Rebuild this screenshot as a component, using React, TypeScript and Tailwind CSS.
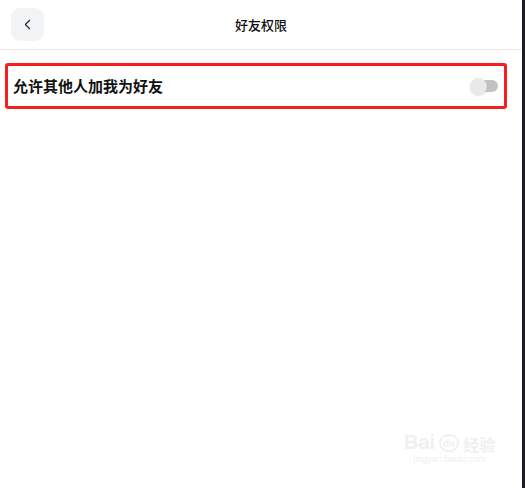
import { ChevronLeft } from "lucide-react";

const FONT = { fontFamily: '"Noto Sans CJK SC", "Noto Sans", sans-serif' };

function Toggle() {
  return (
    <div className="relative w-[28px] h-[18px] flex items-center">
      <div className="absolute left-[6px] right-0 h-[12px] rounded-full bg-[#c2c2c2]" />
      <div className="absolute left-0 w-[17px] h-[17px] rounded-full bg-[#e9e9e9] shadow-[0_1px_2px_rgba(0,0,0,0.12)]" />
    </div>
  );
}

export default function App() {
  return (
    <div className="w-[525px] h-[488px] flex bg-white" style={FONT}>
      <div className="relative flex-1 flex flex-col">
        {/* Header */}
        <div className="h-[50px] flex items-center border-b border-[#e8e8e8] relative">
          <button className="ml-[11px] w-[33px] h-[33px] rounded-[9px] bg-[#f2f3f5] flex items-center justify-center text-[#222]">
            <ChevronLeft size={17} strokeWidth={1.5} />
          </button>
          <div className="absolute left-0 right-0 text-center text-[13px] font-medium text-[#111] pointer-events-none">
            好友权限
          </div>
        </div>

        {/* Row */}
        <div className="mt-[13px] ml-[5px] w-[502px] h-[46px] border-[3px] border-[#f61e1e] rounded-[3px] flex items-center justify-between pl-[5px] pr-[6px]">
          <span className="text-[15px] font-semibold text-[#111]">允许其他人加我为好友</span>
          <Toggle />
        </div>

        {/* watermark */}
        <div className="absolute left-[404px] top-[432px] flex flex-col items-center text-[#f0f0f0] select-none">
          <div className="flex items-end gap-[4px] leading-none">
            <span className="text-[20px] font-bold" style={{ fontFamily: '"Liberation Sans", sans-serif' }}>Bai</span>
            <span className="w-[20px] h-[18px] rounded-full border-2 border-[#f0f0f0] text-[9px] font-bold flex items-center justify-center leading-none">du</span>
            <span className="text-[16px] font-bold">经验</span>
          </div>
          <span className="text-[9px] leading-none mt-[3px]" style={{ fontFamily: '"Liberation Sans", sans-serif' }}>jingyan.baidu.com</span>
        </div>
      </div>
      <div className="w-[3px] bg-[#1c1b26]" />
    </div>
  );
}
